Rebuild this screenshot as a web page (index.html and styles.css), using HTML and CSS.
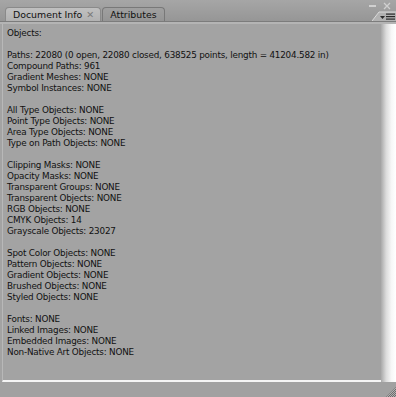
FILE: index.html
```html
<!DOCTYPE html>
<html lang="en">
<head>
  <meta charset="UTF-8">
  <title>Document Info</title>
  <link rel="stylesheet" href="styles.css">
</head>
<body>
  <div class="panel">
    <div class="header">
      <div class="tabs">
        <div class="tab active">Document Info <span class="tab-close">&#x2715;</span></div>
        <div class="tab">Attributes</div>
      </div>
      <div class="controls">
        <div class="win-btns">
          <svg width="8" height="8" viewBox="0 0 8 8"><rect x="0" y="3" width="7" height="2" fill="#d0d0d0"/></svg>
          <svg width="8" height="8" viewBox="0 0 8 8"><path d="M1 1 L7 7 M7 1 L1 7" stroke="#d0d0d0" stroke-width="1.3"/></svg>
        </div>
        <div class="flyout">
          <svg width="24" height="10" viewBox="0 0 24 10">
            <path d="M0 10 L7 1 L24 1 L24 10 Z" fill="#b2b2b2"/>
            <path d="M0 10 L7 1 L24 1" fill="none" stroke="#dadada" stroke-width="1"/>
            <path d="M8 5 L13 5 L10.5 8 Z" fill="#2a2a2a"/>
            <rect x="14" y="2.5" width="9" height="1.2" fill="#2a2a2a"/>
            <rect x="14" y="5" width="9" height="1.2" fill="#2a2a2a"/>
            <rect x="14" y="7.5" width="9" height="1.2" fill="#2a2a2a"/>
          </svg>
        </div>
      </div>
    </div>
    <div class="body">
      <div class="info">
        <div>Objects:</div>
        <div class="gap"></div>
        <div>Paths: 22080 (0 open, 22080 closed, 638525 points, length = 41204.582 in)</div>
        <div>Compound Paths: 961</div>
        <div>Gradient Meshes: NONE</div>
        <div>Symbol Instances: NONE</div>
        <div class="gap"></div>
        <div>All Type Objects: NONE</div>
        <div>Point Type Objects: NONE</div>
        <div>Area Type Objects: NONE</div>
        <div>Type on Path Objects: NONE</div>
        <div class="gap"></div>
        <div>Clipping Masks: NONE</div>
        <div>Opacity Masks: NONE</div>
        <div>Transparent Groups: NONE</div>
        <div>Transparent Objects: NONE</div>
        <div>RGB Objects: NONE</div>
        <div>CMYK Objects: 14</div>
        <div>Grayscale Objects: 23027</div>
        <div class="gap"></div>
        <div>Spot Color Objects: NONE</div>
        <div>Pattern Objects: NONE</div>
        <div>Gradient Objects: NONE</div>
        <div>Brushed Objects: NONE</div>
        <div>Styled Objects: NONE</div>
        <div class="gap"></div>
        <div>Fonts: NONE</div>
        <div>Linked Images: NONE</div>
        <div>Embedded Images: NONE</div>
        <div>Non-Native Art Objects: NONE</div>
      </div>
      <div class="scrollbar"></div>
    </div>
    <div class="footer">
      <div class="grip"></div>
    </div>
  </div>
</body>
</html>
```

FILE: styles.css
```css
body {
  margin: 0;
  font-family: "DejaVu Sans", Verdana, sans-serif;
  background: #9e9e9e;
}
.panel {
  width: 396px;
  height: 397px;
  display: flex;
  flex-direction: column;
  background: #a3a3a3;
  overflow: hidden;
}
.header {
  height: 21px;
  display: flex;
  justify-content: space-between;
  background: linear-gradient(#a6a6a6, #969696);
  border-bottom: 1px solid #7c7c7c;
}
.tabs {
  display: flex;
  align-items: flex-end;
  padding-left: 5px;
  gap: 1px;
}
.tab {
  height: 13px;
  padding: 0 7px;
  font-size: 9.4px;
  line-height: 14px;
  color: #111;
  background: linear-gradient(#a0a0a0, #959595);
  border: 1px solid #787878;
  border-bottom: none;
  border-radius: 4px 4px 0 0;
}
.tab.active {
  padding-left: 7px;
  padding-right: 6px;
  background: linear-gradient(#c0c0c0, #b2b2b2);
  border-color: #8a8a8a;
}
.tab-close {
  color: #7a7a7a;
  font-size: 9.5px;
  margin-left: 1px;
}
.controls {
  display: flex;
  flex-direction: column;
  justify-content: space-between;
  align-items: flex-end;
}
.win-btns {
  display: flex;
  gap: 6px;
  padding: 2px 5px 0 0;
}
.flyout {
  height: 10px;
  line-height: 0;
}
.body {
  flex: 1;
  display: flex;
  border-top: 2px solid #b4b4b4;
  min-height: 0;
}
.info {
  flex: 1;
  padding: 4px 0 0 4px;
  font-size: 8.8px;
  letter-spacing: -0.2px;
  line-height: 11px;
  color: #111;
  border-left: 1px solid #b8b8b8;
  margin-left: 2px;
  border-bottom: 2px solid #f4f4f4;
}
.gap {
  height: 11px;
}
.scrollbar {
  width: 15px;
  background: linear-gradient(to right, #a9a9a9, #dcdcdc 35%, #f7f7f7 70%, #ffffff);
}
.footer {
  height: 15px;
  display: flex;
  justify-content: flex-end;
  align-items: flex-end;
  background: #a1a1a1;
}
.grip {
  width: 10px;
  height: 10px;
  background: repeating-conic-gradient(#6c6c6c 0 25%, #b0b0b0 0 50%) 0 0 / 2px 2px;
  clip-path: polygon(100% 0, 100% 100%, 0 100%);
}
```
